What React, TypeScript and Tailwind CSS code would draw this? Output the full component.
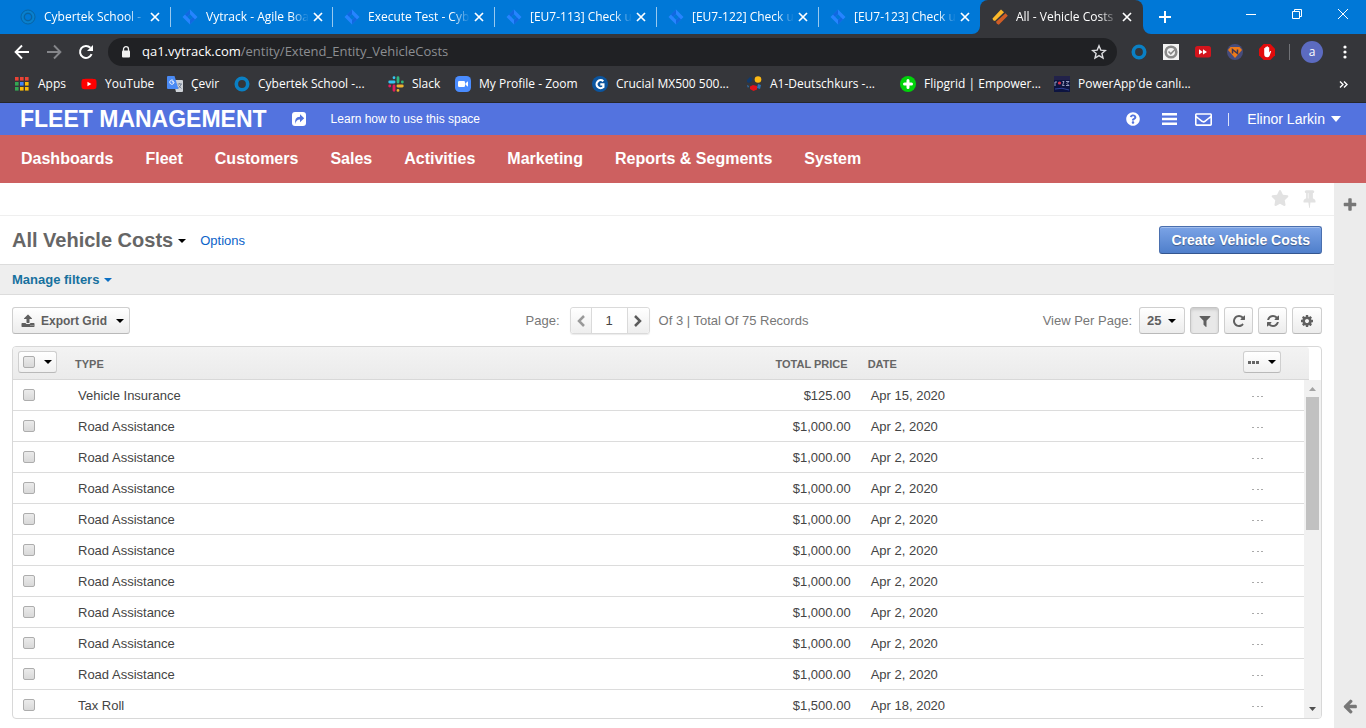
import type { ReactNode } from "react";
import { FaStar, FaQuestionCircle, FaRegEnvelope, FaYoutube } from "react-icons/fa";

const ICONS = {
  refresh:
    "M1639 1056q0 5-1 7-64 268-268 434.500t-478 166.500q-146 0-282.500-55t-243.500-157l-129 129q-19 19-45 19t-45-19-19-45v-448q0-26 19-45t45-19h448q26 0 45 19t19 45-19 45l-137 137q71 66 161 102t187 36q134 0 250-65t186-179q11-17 53-117 8-23 30-23h192q13 0 22.500 9.500t9.500 22.500zm25-800v448q0 26-19 45t-45 19h-448q-26 0-45-19t-19-45 19-45l138-138q-148-137-349-137-134 0-250 65t-186 179q-11 17-53 117-8 23-30 23h-199q-13 0-22.500-9.500t-9.500-22.500v-7q65-268 270-434.500t480-166.500q146 0 284 55.500t245 156.500l130-129q19-19 45-19t45 19 19 45z",
  repeat:
    "M1664 256v448q0 26-19 45t-45 19h-448q-42 0-59-40-17-39 14-69l138-138q-148-137-349-137-104 0-198.500 40.500t-163.500 109.500-109.500 163.500-40.500 198.500 40.500 198.500 109.500 163.500 163.500 109.500 198.500 40.500q119 0 225-52t179-147q7-10 23-12 15 0 25 9l137 138q9 8 9.500 20.500t-7.500 22.500q-109 132-264 204.500t-327 72.500q-156 0-298-61t-245-164-164-245-61-298 61-298 164-245 245-164 298-61q147 0 284.500 55.500t244.500 156.500l130-129q29-31 70-14 39 17 39 59z",
  upload:
    "M1344 1472q0-26-19-45t-45-19-45 19-19 45 19 45 45 19 45-19 19-45zm256 0q0-26-19-45t-45-19-45 19-19 45 19 45 45 19 45-19 19-45zm128-224v320q0 40-28 68t-68 28h-1472q-40 0-68-28t-28-68v-320q0-40 28-68t68-28h427q21 56 70.500 92t110.500 36h256q61 0 110.500-36t70.500-92h427q40 0 68 28t28 68zm-325-648q-17 40-59 40h-256v448q0 26-19 45t-45 19h-256q-26 0-45-19t-19-45v-448h-256q-42 0-59-40-17-39 14-69l448-448q18-19 45-19t45 19l448 448q31 30 14 69z",
  filter:
    "M1595 295q17 41-14 70l-493 493v742q0 42-39 59-13 5-25 5-27 0-45-19l-256-256q-19-19-19-45v-486l-493-493q-31-29-14-70 17-39 59-39h1280q42 0 59 39z",
  cog: "M1152 896q0-106-75-181t-181-75-181 75-75 181 75 181 181 75 181-75 75-181zm512-109v222q0 12-8 23t-20 13l-185 28q-19 54-39 91 35 50 107 138 10 12 10 25t-9 23q-27 37-99 108t-94 71q-12 0-26-9l-138-108q-44 23-91 38-16 136-29 186-7 28-36 28h-222q-14 0-24.500-8.500t-11.500-21.500l-28-184q-49-16-90-37l-141 107q-10 9-25 9-14 0-25-11-126-114-165-168-7-10-7-23 0-12 8-23 15-21 51-66.500t54-70.500q-27-50-41-99l-183-27q-13-2-21-12.500t-8-23.500v-222q0-12 8-23t19-13l186-28q14-46 39-92-40-57-107-138-10-12-10-24 0-10 9-23 26-36 98.500-107.500t94.500-71.500q13 0 26 10l138 107q44-23 91-38 16-136 29-186 7-28 36-28h222q14 0 24.500 8.500t11.500 21.500l28 184q49 16 90 37l142-107q9-9 24-9 13 0 25 10 129 119 165 170 7 8 7 22 0 12-8 23-15 21-51 66.500t-54 70.500q26 50 41 98l183 28q13 2 21 12.500t8 23.500z",
  plus: "M1600 736v192q0 40-28 68t-68 28h-416v416q0 40-28 68t-68 28h-192q-40 0-68-28t-28-68v-416h-416q-40 0-68-28t-28-68v-192q0-40 28-68t68-28h416v-416q0-40 28-68t68-28h192q40 0 68 28t28 68v416h416q40 0 68 28t28 68z",
  arrowLeft:
    "M1664 896v128q0 53-32.500 90.500t-84.500 37.500h-704l293 294q38 36 38 90t-38 90l-75 76q-37 37-90 37-52 0-91-37l-651-652q-37-37-37-90 0-52 37-91l651-650q38-38 91-38 52 0 90 38l75 74q38 38 38 91t-38 91l-293 293h704q52 0 84.500 37.500t32.500 90.500z",
  pin: "M800 864v-448q0-14-9-23t-23-9-23 9-9 23v448q0 14 9 23t23 9 23-9 9-23zm672 352q0 26-19 45t-45 19h-429l-51 483q-2 12-10.500 20.500t-20.500 8.500h-1q-27 0-32-27l-76-485h-404q-26 0-45-19t-19-45q0-123 78.500-221.500t177.500-98.500v-512q-52 0-90-38t-38-90 38-90 90-38h640q52 0 90 38t38 90-38 90-90 38v512q99 0 177.500 98.500t78.500 221.500z",
};

function Icon({ name, className }: { name: keyof typeof ICONS; className: string }) {
  return (
    <svg viewBox="0 0 1792 1792" fill="currentColor" className={className} aria-hidden="true">
      <path d={ICONS[name]} />
    </svg>
  );
}

function Caret({ className = "" }: { className?: string }) {
  return (
    <svg viewBox="0 0 8 4" width="8" height="4" fill="currentColor" className={`shrink-0 ${className}`} aria-hidden="true">
      <path d="M0 0h8L4 4z" />
    </svg>
  );
}

function Cross() {
  return (
    <svg viewBox="0 0 10 10" className="size-[10px]" stroke="#fff" strokeWidth="1.700" aria-hidden="true">
      <path d="M1 1l8 8M9 1L1 9" />
    </svg>
  );
}

function Ring() {
  return (
    <svg viewBox="0 0 16 16" className="size-4" fill="none" aria-hidden="true">
      <circle cx="8" cy="8" r="5.700" stroke="#0a80c4" strokeWidth="3.600" />
    </svg>
  );
}

function OutlineRing() {
  return (
    <svg viewBox="0 0 16 16" className="size-4" fill="none" stroke="#0a64a0" strokeWidth="1" aria-hidden="true">
      <circle cx="8" cy="8" r="7" />
      <circle cx="8" cy="8" r="3.700" strokeWidth="1.400" />
      <circle cx="8" cy="8" r="5.500" stroke="#0b82cb" strokeWidth="1.500" />
    </svg>
  );
}

function Jira() {
  return (
    <svg viewBox="0 0 16 16" className="size-4" aria-hidden="true">
      <path d="M8 0.500L15.500 8 8 15.500 0.500 8z" fill="#2684ff" />
      <path d="M8 0.500v4.800L5.300 8 2.900 5.600z" fill="#1068e0" />
      <path d="M8 15.500v-4.800L10.700 8l2.400 2.400z" fill="#1068e0" />
      <path d="M8 5.300L10.700 8 8 10.700 5.300 8z" fill="#0078d7" />
    </svg>
  );
}

function OroLogo() {
  return (
    <svg viewBox="0 0 16 16" className="size-4" aria-hidden="true">
      <path d="M0.500 9.500L9 0.500l3 2.800-9 8.800q-2.500-0.500-2.500-2.600z" fill="#fbb829" />
      <path d="M4 12.800l9.500-8.600 2.300 2.600-9 9q-2.500-0.600-2.800-3z" fill="#cf5d26" />
    </svg>
  );
}

const TABS: { title: string; icon: "ring" | "jira" | "oro"; active?: boolean }[] = [
  { title: "Cybertek School -", icon: "ring" },
  { title: "Vytrack - Agile Boa", icon: "jira" },
  { title: "Execute Test - Cyb", icon: "jira" },
  { title: "[EU7-113] Check u", icon: "jira" },
  { title: "[EU7-122] Check u", icon: "jira" },
  { title: "[EU7-123] Check u", icon: "jira" },
  { title: "All - Vehicle Costs", icon: "oro", active: true },
];

function TabStrip() {
  return (
    <div className="flex h-[34px] bg-[#0078d7] pl-2 text-white">
      {TABS.map((tab, i) => (
        <div
          key={tab.title}
          className={
            tab.active
              ? "relative flex w-[163px] items-center rounded-t-lg bg-[#35363a] pl-3"
              : "relative flex w-[162px] items-center pl-3"
          }
        >
          {tab.active && (
            <svg viewBox="0 0 179 8" className="absolute bottom-0 -left-2 h-2 w-[179px] max-w-none" fill="#35363a" aria-hidden="true">
              <path d="M0 8a8 8 0 0 0 8-8v8zM179 8a8 8 0 0 1-8-8v8z" />
            </svg>
          )}
          <span className="w-6 shrink-0">
            {tab.icon === "ring" ? <OutlineRing /> : tab.icon === "jira" ? <Jira /> : <OroLogo />}
          </span>
          <span className="min-w-[102px] shrink-0 text-xs whitespace-nowrap [mask-image:linear-gradient(to_right,#000_82%,transparent)]">
            {tab.title}
          </span>
          <button type="button" aria-label="Close tab" className="ml-[2px] flex size-[14px] shrink-0 items-center justify-center">
            <Cross />
          </button>
          {!tab.active && i < 5 && <span className="absolute top-[7px] -right-px h-5 w-px bg-white/60" />}
        </div>
      ))}
      <button type="button" aria-label="New tab" className="ml-[10px] flex w-6 items-center justify-center">
        <svg viewBox="0 0 12 12" className="size-3" stroke="#fff" strokeWidth="2" aria-hidden="true">
          <path d="M6 0v12M0 6h12" />
        </svg>
      </button>
      <div className="ml-auto flex h-7 text-white">
        <button type="button" aria-label="Minimize" className="flex w-[46px] items-center justify-center">
          <svg viewBox="0 0 10 10" className="size-[10px]" stroke="#fff" aria-hidden="true">
            <path d="M0 5.500h10" />
          </svg>
        </button>
        <button type="button" aria-label="Restore" className="flex w-[46px] items-center justify-center">
          <svg viewBox="0 0 10 10" className="size-[10px]" stroke="#fff" fill="none" aria-hidden="true">
            <path d="M0.500 2.500h7v7h-7zM2.500 2.500v-2h7v7h-2" />
          </svg>
        </button>
        <button type="button" aria-label="Close window" className="flex w-[46px] items-center justify-center">
          <svg viewBox="0 0 10 10" className="size-[10px]" stroke="#fff" aria-hidden="true">
            <path d="M0 0l10 10M10 0L0 10" />
          </svg>
        </button>
      </div>
    </div>
  );
}

function Toolbar() {
  return (
    <div className="flex h-9 items-center pr-[19px] pl-[14px]">
      <button type="button" aria-label="Back" className="mr-4">
        <svg viewBox="0 0 16 16" className="size-4" fill="none" stroke="#fff" strokeWidth="1.900" aria-hidden="true">
          <path d="M15 8H2M8 1.500L1.600 8 8 14.500" />
        </svg>
      </button>
      <button type="button" aria-label="Forward" className="mr-4">
        <svg viewBox="0 0 16 16" className="size-4" fill="none" stroke="#85868a" strokeWidth="1.900" aria-hidden="true">
          <path d="M1 8h13M8 1.500L14.400 8 8 14.500" />
        </svg>
      </button>
      <button type="button" aria-label="Reload" className="mr-[14px]">
        <svg viewBox="0 0 16 16" className="size-4" aria-hidden="true">
          <path d="M13.600 10.200a6 6 0 1 1-1.200-6.400" fill="none" stroke="#fff" strokeWidth="2" />
          <path d="M15 1v6H9z" fill="#fff" />
        </svg>
      </button>
      <div className="flex h-7 flex-1 items-center rounded-full bg-[#202124] pr-[10px] pl-[13px]">
        <svg viewBox="0 0 10 12" className="h-3 w-[10px]" aria-hidden="true">
          <path d="M2.500 5V3.200a2.500 2.500 0 0 1 5 0V5" fill="none" stroke="#f1f1f1" strokeWidth="1.300" />
          <rect x="1" y="4.500" width="8" height="7" rx="1" fill="#f1f1f1" />
        </svg>
        <a href="#address" className="ml-[11px] text-[13px] whitespace-nowrap text-[#8c8e92]">
          <span className="text-white">qa1.vytrack.com</span>/entity/Extend_Entity_VehicleCosts
        </a>
        <button type="button" aria-label="Bookmark this page" className="ml-auto">
          <svg viewBox="0 0 16 16" className="size-4" fill="none" stroke="#dcdde0" strokeWidth="1.400" aria-hidden="true">
            <path d="M8 1.800l1.800 4.300 4.600.4-3.500 3 1.100 4.500L8 11.600 4 14l1.100-4.500-3.500-3 4.600-.4z" />
          </svg>
        </button>
      </div>
      <div className="ml-[14px] flex items-center gap-4">
        <Ring />
        <svg viewBox="0 0 16 16" className="size-4" aria-hidden="true">
          <rect width="16" height="16" fill="#f3f3f3" />
          <circle cx="8" cy="8" r="5.300" fill="none" stroke="#8a8a8a" strokeWidth="2.600" />
          <path d="M5.500 7.500l2.300 2.300L13 4.500" fill="none" stroke="#8a8a8a" strokeWidth="1.600" />
        </svg>
        <svg viewBox="0 0 16 16" className="size-4" aria-hidden="true">
          <rect y="2" width="16" height="11.500" rx="2.500" fill="#d3141c" />
          <path d="M4 5.200l3.800 2.700L4 10.600zM8 5.200l4 2.700-4 2.700z" fill="#fff" />
        </svg>
        <svg viewBox="0 0 16 16" className="size-4" aria-hidden="true">
          <circle cx="8" cy="8" r="8" fill="#464c7c" />
          <path d="M3.500 3h9L15 6l-7 8-7-8z" fill="#ee7a1a" />
          <path d="M5.500 9.500V5.500l5 4v-4" fill="none" stroke="#3b3550" strokeWidth="1.500" />
        </svg>
        <svg viewBox="0 0 16 16" className="size-4" aria-hidden="true">
          <path d="M4.700 0h6.600L16 4.700v6.600L11.300 16H4.700L0 11.300V4.700z" fill="#e20b0b" />
          <path d="M5.200 4.200q.6-.5 1.100 0V3.200q.7-.7 1.300 0V2.600q.7-.6 1.300 0v.8q.7-.6 1.300 0v5l1-1.400q.7-.3 1 .3L10.500 12q-.7 1.200-2.300 1.200-3 0-3-3z" fill="#fff" />
        </svg>
      </div>
      <span className="ml-[14px] h-4 w-px bg-[#707276]" />
      <button type="button" className="ml-[11px] flex size-[22px] items-center justify-center rounded-full bg-[#5c6bc0] text-xs text-white">
        a
      </button>
      <button type="button" aria-label="Browser menu" className="ml-5">
        <svg viewBox="0 0 4 14" className="h-[14px] w-1" fill="#fff" aria-hidden="true">
          <circle cx="2" cy="2" r="1.600" />
          <circle cx="2" cy="7" r="1.600" />
          <circle cx="2" cy="12" r="1.600" />
        </svg>
      </button>
    </div>
  );
}

function AppsIcon() {
  const colors = ["#ea4335", "#ea4335", "#ea4335", "#34a853", "#4285f4", "#fbbc05", "#34a853", "#fbbc05", "#fbbc05"];
  return (
    <svg viewBox="0 0 16 16" className="size-4" aria-hidden="true">
      {colors.map((c, i) => (
        <rect key={i} x={1 + (i % 3) * 5} y={1 + Math.floor(i / 3) * 5} width="3.600" height="3.600" fill={c} />
      ))}
    </svg>
  );
}

function TranslateIcon() {
  return (
    <svg viewBox="0 0 16 16" className="size-4" aria-hidden="true">
      <path d="M6 4h9q1 0 1 1v10q0 1-1 1H9z" fill="#cfd3d8" />
      <path d="M1 0h6.500l4 13H1q-1 0-1-1V1q0-1 1-1z" fill="#4a8af4" />
      <path d="M7 5.800H4.800M6.200 4.500a2.100 2.100 0 1 0 .8 1.500" fill="none" stroke="#fff" strokeWidth="1" />
      <path d="M10.500 8h4.500M12.700 7v1M14.200 8q-.8 3-3 4M11.500 9.500l3 3" fill="none" stroke="#66758a" strokeWidth=".8" />
    </svg>
  );
}

function SlackIcon() {
  return (
    <svg viewBox="0 0 16 16" className="size-4" strokeWidth="2.800" strokeLinecap="round" aria-hidden="true">
      <path d="M1.700 6h4.400M6 1.700v.1" stroke="#36c5f0" />
      <path d="M10 1.700v4.400M14.300 6h.1" stroke="#2eb67d" />
      <path d="M9.900 10h4.400M10 14.300v.1" stroke="#ecb22e" />
      <path d="M6 9.900v4.400M1.700 10h.1" stroke="#e01e5a" />
    </svg>
  );
}

function ZoomIcon() {
  return (
    <svg viewBox="0 0 16 16" className="size-4" aria-hidden="true">
      <rect width="16" height="16" rx="4.500" fill="#4a8cff" />
      <rect x="3" y="5" width="7" height="6" rx="1.200" fill="#fff" />
      <path d="M10.500 7.200L13 5.300v5.400l-2.500-1.900z" fill="#fff" />
    </svg>
  );
}

function CrucialIcon() {
  return (
    <svg viewBox="0 0 16 16" className="size-4" aria-hidden="true">
      <circle cx="8" cy="8" r="8" fill="#0b559f" />
      <path d="M11.300 5.200A4 4 0 1 0 11.400 11V8.300H8.300" fill="none" stroke="#fff" strokeWidth="2.200" />
    </svg>
  );
}

function CourseIcon() {
  return (
    <svg viewBox="0 0 16 16" className="size-4" aria-hidden="true">
      <path d="M1 4l3-3 2 1v3L3 7 1 6z" fill="#123a6b" />
      <circle cx="12" cy="3.500" r="3.300" fill="#fdb913" />
      <path d="M4 10.500l3-1.500 4 1v3.500L7.500 15 4 13z" fill="#e2131a" />
      <path d="M12 8l3 1-1 4-3-1z" fill="#2e74b5" />
      <path d="M1 9l2 1-1 2z" fill="#2e74b5" />
    </svg>
  );
}

function FlipgridIcon() {
  return (
    <svg viewBox="0 0 16 16" className="size-4" aria-hidden="true">
      <circle cx="8" cy="8" r="8" fill="#00d30a" />
      <path d="M8 4.500v7M4.500 8h7" stroke="#fff" strokeWidth="3" strokeLinecap="round" />
    </svg>
  );
}

function PowerIcon() {
  return (
    <svg viewBox="0 0 16 16" className="size-4" aria-hidden="true">
      <rect width="16" height="16" fill="#0d1440" />
      <path d="M0 0h16v4H0z" fill="#22224a" />
      <circle cx="5.500" cy="7" r="1.600" fill="#d8324a" />
      <path d="M1 6v4M1 6h2M8.500 5.500h1.500l-1.500 4h2M12 5.500h3l-2 2 2 2h-3" fill="none" stroke="#b9bfe0" strokeWidth=".8" />
      <path d="M1 13q7-2 14 1" stroke="#33439a" fill="none" />
    </svg>
  );
}

const BOOKMARKS: { label: string; width: string; icon: ReactNode }[] = [
  { label: "Apps", width: "w-[67px]", icon: <AppsIcon /> },
  { label: "YouTube", width: "w-[86px]", icon: <FaYoutube className="size-4 text-[#ff0000] [background:linear-gradient(#fff,#fff)_center/6px_6px_no-repeat]" /> },
  { label: "Çevir", width: "w-[67px]", icon: <TranslateIcon /> },
  { label: "Cybertek School -...", width: "w-[154px]", icon: <Ring /> },
  { label: "Slack", width: "w-[67px]", icon: <SlackIcon /> },
  { label: "My Profile - Zoom", width: "w-[137px]", icon: <ZoomIcon /> },
  { label: "Crucial MX500 500...", width: "w-[154px]", icon: <CrucialIcon /> },
  { label: "A1-Deutschkurs -...", width: "w-[154px]", icon: <CourseIcon /> },
  { label: "Flipgrid | Empower...", width: "w-[154px]", icon: <FlipgridIcon /> },
  { label: "PowerApp'de canlı...", width: "w-[154px]", icon: <PowerIcon /> },
];

function BookmarkBar() {
  return (
    <div className="flex h-8 items-center pr-[18px] pb-1 pl-[14px] text-xs text-white">
      {BOOKMARKS.map((b) => (
        <a key={b.label} href="#bookmark" className={`flex shrink-0 items-center gap-2 whitespace-nowrap ${b.width}`}>
          {b.icon}
          {b.label}
        </a>
      ))}
      <button type="button" aria-label="More bookmarks" className="ml-auto">
        <svg viewBox="0 0 9 7" className="h-[7px] w-[9px]" fill="none" stroke="#fff" strokeWidth="1.400" aria-hidden="true">
          <path d="M1 .5l3 3-3 3M5 .5l3 3-3 3" />
        </svg>
      </button>
    </div>
  );
}

function AppHeader() {
  const links = ["Dashboards", "Fleet", "Customers", "Sales", "Activities", "Marketing", "Reports & Segments", "System"];
  return (
    <header className="text-white">
      <div className="flex h-8 items-center bg-[#5373df] pr-[25px] pl-5">
        <h1 className="text-[23px] leading-8 font-bold">FLEET MANAGEMENT</h1>
        <a href="#share" aria-label="Share" className="ml-6">
          <svg viewBox="0 0 16 16" className="size-4" aria-hidden="true">
            <rect x="1" y="1" width="14" height="14" rx="3" fill="#fff" />
            <path d="M4.500 13q-1.700-7 4.500-7.200V3.200l4.200 4-4.200 4V8.400Q5 8.200 4.500 13z" fill="#5373df" />
          </svg>
        </a>
        <a href="#learn" className="ml-6 text-xs">
          Learn how to use this space
        </a>
        <div className="ml-auto flex items-center">
          <button type="button" aria-label="Help">
            <FaQuestionCircle className="size-[14px]" />
          </button>
          <button type="button" aria-label="Shortcuts" className="ml-[22px]">
            <svg viewBox="0 0 15 12" className="h-3 w-[15px]" fill="#fff" aria-hidden="true">
              <path d="M0 0h15v2.400H0zM0 4.800h15v2.400H0zM0 9.600h15V12H0z" />
            </svg>
          </button>
          <button type="button" aria-label="Mail" className="ml-[18px]">
            <FaRegEnvelope className="size-[17px]" />
          </button>
          <span className="ml-4 h-[13px] w-px bg-white/80" />
          <button type="button" className="ml-[18px] flex items-center gap-[6px] text-sm">
            Elinor Larkin
            <svg viewBox="0 0 10 6" className="h-[6px] w-[10px]" fill="#fff" aria-hidden="true">
              <path d="M0 0h10L5 6z" />
            </svg>
          </button>
        </div>
      </div>
      <nav className="flex h-12 items-center gap-8 bg-[#cd6060] px-[21px] text-base font-bold">
        {links.map((l) => (
          <a key={l} href="#nav">
            {l}
          </a>
        ))}
      </nav>
    </header>
  );
}

const BTN =
  "flex h-[27px] items-center rounded-[3px] border border-[#cfcfcf] border-b-[#b9b9b9] bg-linear-to-b from-white to-[#ececec] text-[#5f5f5f]";

function GridToolbar() {
  return (
    <div className="grid grid-cols-[1fr_auto_1fr] items-center px-3 py-3 text-[13px] text-[#777]">
      <button type="button" className={`${BTN} w-[118px] justify-self-start pl-2 text-xs font-bold`}>
        <Icon name="upload" className="size-[14px]" />
        <span className="ml-[6px]">Export Grid</span>
        <Caret className="ml-[9px] text-black" />
      </button>
      <div className="flex items-center">
        <label htmlFor="page-number">Page:</label>
        <div className="ml-[10px] flex h-[27px] rounded-[3px] border border-[#dadada] shadow-[0_1px_1px_rgba(0,0,0,0.08)]">
          <button type="button" aria-label="Previous page" className="flex w-5 items-center justify-center rounded-l-[3px] bg-linear-to-b from-white to-[#eee]">
            <svg viewBox="0 0 8 12" className="h-3 w-2" fill="none" stroke="#999" strokeWidth="2.500" aria-hidden="true">
              <path d="M7 1L2 6l5 5" />
            </svg>
          </button>
          <input
            id="page-number"
            defaultValue="1"
            className="w-[37px] border-x border-[#dadada] bg-white text-center text-[13px] text-[#444]"
          />
          <button type="button" aria-label="Next page" className="flex w-[21px] items-center justify-center rounded-r-[3px] bg-linear-to-b from-white to-[#eee]">
            <svg viewBox="0 0 8 12" className="h-3 w-2" fill="none" stroke="#5b5b5b" strokeWidth="2.500" aria-hidden="true">
              <path d="M1 1l5 5-5 5" />
            </svg>
          </button>
        </div>
        <span className="ml-[9px]">Of 3 | Total Of 75 Records</span>
      </div>
      <div className="flex items-center justify-self-end">
        <label htmlFor="per-page">View Per Page:</label>
        <div className="relative ml-[7px]">
          <select
            id="per-page"
            defaultValue="25"
            className="h-[27px] w-[46px] appearance-none rounded-[3px] border border-[#cfcfcf] border-b-[#b9b9b9] bg-linear-to-b from-white to-[#ececec] pl-[7px] text-[13px] font-bold text-[#5f5f5f]"
          >
            <option>10</option>
            <option>25</option>
            <option>50</option>
            <option>100</option>
          </select>
          <Caret className="pointer-events-none absolute top-3 right-[9px] text-black" />
        </div>
        <button
          type="button"
          aria-label="Filters"
          className="ml-[5px] flex h-[27px] w-[29px] items-center justify-center rounded-[3px] border border-[#c4c4c4] bg-[#e8e8e8] text-[#5f5f5f] shadow-[inset_0_2px_3px_rgba(0,0,0,0.12)]"
        >
          <Icon name="filter" className="size-[14px]" />
        </button>
        <button type="button" aria-label="Refresh" className={`${BTN} ml-[5px] w-[29px] justify-center`}>
          <Icon name="repeat" className="size-[14px]" />
        </button>
        <button type="button" aria-label="Reset" className={`${BTN} ml-[5px] w-[29px] justify-center`}>
          <Icon name="refresh" className="size-[14px]" />
        </button>
        <button type="button" aria-label="Grid settings" className={`${BTN} ml-[5px] w-[30px] justify-center`}>
          <Icon name="cog" className="size-[14px]" />
        </button>
      </div>
    </div>
  );
}

const ROWS = [
  { type: "Vehicle Insurance", price: "$125.00", date: "Apr 15, 2020" },
  ...Array.from({ length: 9 }, () => ({ type: "Road Assistance", price: "$1,000.00", date: "Apr 2, 2020" })),
  { type: "Tax Roll", price: "$1,500.00", date: "Apr 18, 2020" },
];

function Check({ label }: { label: string }) {
  return (
    <input
      type="checkbox"
      aria-label={label}
      className="block size-3 appearance-none rounded-[2px] border border-[#adadad] bg-linear-to-b from-[#ebebeb] to-[#d9d9d9]"
    />
  );
}

function DataGrid() {
  return (
    <div className="mx-3 mb-[9px] flex min-h-0 flex-1 overflow-hidden rounded-[4px] border border-[#d8d8d8]">
      <div className="min-w-0 flex-1 overflow-hidden">
        <table className="w-full table-fixed border-separate border-spacing-0 text-left text-[13px] text-[#444]">
          <thead>
            <tr className="h-[33px] text-[11px] text-[#666] [&>th]:border-b [&>th]:border-[#d8d8d8] [&>th]:bg-linear-to-b [&>th]:from-[#f3f3f3] [&>th]:to-[#ebebeb] [&>th]:px-0">
              <th className="w-[55px] pb-[2px]">
                <div className="ml-[5px] flex h-[22px] w-[39px] items-center justify-between rounded-[3px] border border-[#cfcfcf] border-b-[#b9b9b9] bg-linear-to-b from-white to-[#f0f0f0] px-1">
                  <Check label="Select all rows" />
                  <button type="button" aria-label="Selection menu">
                    <Caret className="text-black" />
                  </button>
                </div>
              </th>
              <th className="pt-[2px]">
                <span className="ml-[7px]">TYPE</span>
              </th>
              <th className="w-[150px] pt-[2px] text-right">
                <span className="mr-[13px]">TOTAL PRICE</span>
              </th>
              <th className="w-[29%] pt-[2px]">
                <span className="ml-[7px]">DATE</span>
              </th>
              <th className="w-[69px] pb-[2px]">
                <button
                  type="button"
                  aria-label="Actions"
                  className="ml-2 flex h-[22px] w-[38px] items-center justify-between rounded-[3px] border border-[#cfcfcf] border-b-[#b9b9b9] bg-linear-to-b from-white to-[#f0f0f0] px-1"
                >
                  <svg viewBox="0 0 11 3" className="h-[3px] w-[11px]" fill="#666" aria-hidden="true">
                    <path d="M0 0h3v3H0zM4 0h3v3H4zM8 0h3v3H8z" />
                  </svg>
                  <Caret className="text-black" />
                </button>
              </th>
            </tr>
          </thead>
          <tbody>
            {ROWS.map((r, i) => (
              <tr key={i} className="h-[31px] [&>td]:border-b [&>td]:border-[#dcdcdc] [&>td]:p-0 [&>td+td]:pt-[2px]">
                <td>
                  <div className="ml-[10px]">
                    <Check label={`Select row ${i + 1}`} />
                  </div>
                </td>
                <td>
                  <span className="ml-[10px]">{r.type}</span>
                </td>
                <td className="text-right">
                  <span className="mr-[10px]">{r.price}</span>
                </td>
                <td>
                  <span className="ml-[10px]">{r.date}</span>
                </td>
                <td>
                  <button type="button" aria-label="Row actions" className="ml-[17px] block">
                    <svg viewBox="0 0 12 2" className="h-[2px] w-3" fill="#aaa" aria-hidden="true">
                      <path d="M0 1h2v1H0zM5 1h2v1H5zM9 1h2v1H9z" />
                    </svg>
                  </button>
                </td>
              </tr>
            ))}
          </tbody>
        </table>
      </div>
      <div className="flex w-[17px] flex-col">
        <div className="h-[33px] w-[5px] shrink-0 rounded-tr-[3px] border-b border-[#d8d8d8] bg-linear-to-b from-[#f3f3f3] to-[#ebebeb]" />
        <div className="flex flex-1 flex-col items-center bg-[#f1f1f1]">
          <svg viewBox="0 0 17 17" className="size-[17px]" fill="#a3a3a3" aria-hidden="true">
            <path d="M5 11l3.500-4 3.500 4z" />
          </svg>
          <div className="h-[133px] w-[13px] bg-[#c1c1c1]" />
          <svg viewBox="0 0 17 17" className="mt-auto size-[17px]" fill="#505050" aria-hidden="true">
            <path d="M5 6l3.500 4L12 6z" />
          </svg>
        </div>
      </div>
    </div>
  );
}

export default function App() {
  return (
    <div className="flex h-screen flex-col overflow-hidden bg-white font-['Liberation_Sans',Arial,sans-serif]">
      <div className="border-b border-[#26272a] bg-[#35363a] font-['Open_Sans','Noto_Sans',sans-serif]">
        <TabStrip />
        <Toolbar />
        <BookmarkBar />
      </div>
      <AppHeader />
      <div className="flex min-h-0 flex-1">
        <main className="flex min-w-0 flex-1 flex-col">
          <div className="flex h-[33px] items-start justify-end gap-[11px] border-b border-[#efefef] pt-[6px] pr-[15px] text-[#e2e2e2]">
            <button type="button" aria-label="Add to favorites">
              <FaStar className="size-[18px]" />
            </button>
            <button type="button" aria-label="Pin page">
              <Icon name="pin" className="size-[19px]" />
            </button>
          </div>
          <div className="flex h-12 items-center px-3">
            <h2 className="text-xl font-bold text-[#666]">All Vehicle Costs</h2>
            <button type="button" aria-label="Views" className="ml-[5px] pt-[2px]">
              <Caret className="text-black" />
            </button>
            <a href="#options" className="ml-[14px] pt-[2px] text-[13px] text-[#0b63c9]">
              Options
            </a>
            <a
              href="#create"
              className="ml-auto flex h-7 items-center rounded-[3px] border border-[#4a6fae] border-b-[#34568f] bg-linear-to-b from-[#7ba3e6] to-[#4f7fcb] px-[11px] text-sm font-bold text-white shadow-[inset_0_1px_0_rgba(255,255,255,0.3)] [text-shadow:0_1px_1px_rgba(0,0,0,0.35)]"
            >
              Create Vehicle Costs
            </a>
          </div>
          <div className="flex h-[31px] items-center border-y border-[#dcdcdc] bg-[#eee] px-3">
            <button type="button" className="flex items-center gap-[5px] text-[13px] font-bold text-[#17719e]">
              Manage filters
              <Caret className="text-[#0b6fc4]" />
            </button>
          </div>
          <GridToolbar />
          <DataGrid />
        </main>
        <aside className="flex w-8 shrink-0 flex-col items-center justify-between bg-[#ececec] pt-[14px] pb-[14px] text-[#777]">
          <button type="button" aria-label="Add widget">
            <Icon name="plus" className="size-4" />
          </button>
          <button type="button" aria-label="Expand sidebar">
            <Icon name="arrowLeft" className="size-4" />
          </button>
        </aside>
      </div>
    </div>
  );
}
